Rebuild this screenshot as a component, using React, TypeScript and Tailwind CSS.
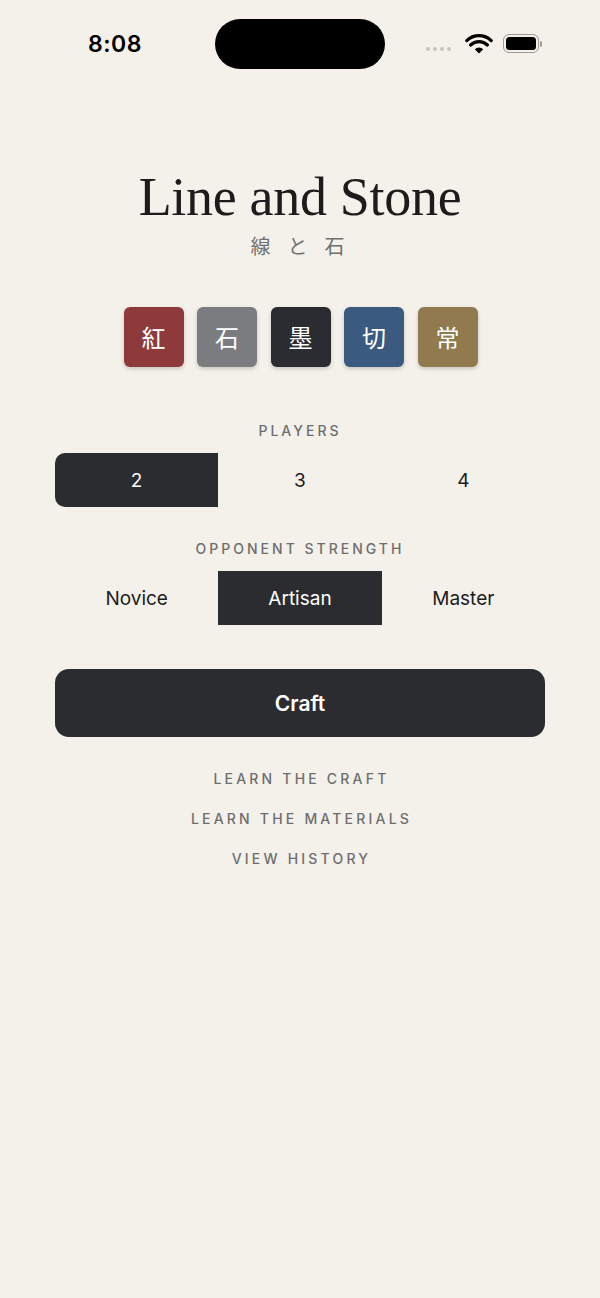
import React from "react";

const tiles = [
  { ch: "紅", bg: "bg-[#8e3a3b]" },
  { ch: "石", bg: "bg-[#7a7c80]" },
  { ch: "墨", bg: "bg-[#2a2c31]" },
  { ch: "切", bg: "bg-[#3b5a80]" },
  { ch: "常", bg: "bg-[#917a4e]" },
];

export default function App() {
  const sans = { fontFamily: "Inter, 'Noto Sans', sans-serif" };
  return (
    <div className="w-[600px] h-[1298px] bg-[#f4f1eb] flex flex-col" style={sans}>
      {/* status bar */}
      <div className="relative h-[88px] flex items-start">
        <div className="absolute left-[88px] top-[29px] text-[23px] font-semibold text-black leading-[30px] tracking-[0.5px]">8:08</div>
        <div className="absolute left-[215px] top-[19px] w-[170px] h-[50px] rounded-full bg-black" />
        <div className="absolute left-[426px] top-[47px] flex gap-[3px]">
          {[0, 1, 2, 3].map((i) => (
            <div key={i} className="w-[4px] h-[4px] rounded-full bg-[#c8c6c2]" />
          ))}
        </div>
        <svg className="absolute left-[465px] top-[33px]" width="28" height="22" viewBox="0 0 28 22">
          <path d="M14 20.5 L9.8 16.2 A6 6 0 0 1 18.2 16.2 Z" fill="#000" />
          <path d="M5.6 12 A12 12 0 0 1 22.4 12" stroke="#000" strokeWidth="3.2" fill="none" strokeLinecap="round" />
          <path d="M1.8 7.6 A17.5 17.5 0 0 1 26.2 7.6" stroke="#000" strokeWidth="3.2" fill="none" strokeLinecap="round" />
        </svg>
        <div className="absolute left-[503px] top-[34px] flex items-center">
          <div className="w-[36px] h-[19px] rounded-[6px] border-[1.5px] border-[#9a9894] p-[2px]">
            <div className="w-full h-full rounded-[3.5px] bg-black" />
          </div>
          <div className="w-[2px] h-[6px] rounded-r-full bg-[#9a9894] ml-[1px]" />
        </div>
      </div>

      {/* title */}
      <div className="mt-[78px] flex flex-col items-center">
        <h1
          className="text-[54px] leading-[62px] text-[#1c1c1c] tracking-[-0.3px]"
          style={{ fontFamily: "'Liberation Serif', 'DejaVu Serif', serif" }}
        >
          Line and Stone
        </h1>
        <div
          className="mt-[4px] text-[20px] leading-[28px] text-[#707070] tracking-[17px] pl-[12px]"
          style={{ fontFamily: "'Noto Sans CJK JP', sans-serif" }}
        >
          線と石
        </div>
      </div>

      {/* tiles */}
      <div className="mt-[47px] flex justify-center gap-[13.5px] pl-[1px]">
        {tiles.map((t) => (
          <div
            key={t.ch}
            className={`w-[60px] h-[60px] rounded-[6px] ${t.bg} flex items-center justify-center text-white text-[24px] shadow-[0_2px_4px_rgba(0,0,0,0.18)]`}
            style={{ fontFamily: "'Noto Sans CJK JP', sans-serif" }}
          >
            {t.ch}
          </div>
        ))}
      </div>

      {/* players */}
      <div className="mt-[55px] text-center text-[14px] leading-[18px] tracking-[3px] text-[#6e6e6e] font-medium">PLAYERS</div>
      <div className="mt-[13px] mx-[55px] flex h-[54px]">
        <div className="flex-1 bg-[#2a2c30] rounded-l-[10px] flex items-center justify-center pt-[3px] text-white text-[19px]">2</div>
        <div className="flex-1 flex items-center justify-center pt-[3px] text-[#1c1c1c] text-[19px]">3</div>
        <div className="flex-1 flex items-center justify-center pt-[3px] text-[#1c1c1c] text-[19px]">4</div>
      </div>

      {/* opponent */}
      <div className="mt-[33px] text-center text-[14px] leading-[18px] tracking-[3px] text-[#6e6e6e] font-medium">OPPONENT STRENGTH</div>
      <div className="mt-[13px] mx-[55px] flex h-[54px]">
        <div className="flex-1 flex items-center justify-center pt-[3px] text-[#1c1c1c] text-[19px]">Novice</div>
        <div className="flex-1 bg-[#2a2c30] flex items-center justify-center pt-[3px] text-white text-[19px]">Artisan</div>
        <div className="flex-1 flex items-center justify-center pt-[3px] text-[#1c1c1c] text-[19px]">Master</div>
      </div>

      {/* craft */}
      <div className="mt-[44px] mx-[55px] h-[68px] rounded-[14px] bg-[#2a2c30] flex items-center justify-center pt-[2px] text-white text-[21px] font-semibold">
        Craft
      </div>

      {/* links */}
      <div className="mt-[33px] flex flex-col items-center gap-[22px]">
        {["LEARN THE CRAFT", "LEARN THE MATERIALS", "VIEW HISTORY"].map((l) => (
          <div key={l} className="text-[14px] leading-[18px] tracking-[3.2px] text-[#6e6e6e] font-medium pl-[3px]">
            {l}
          </div>
        ))}
      </div>
    </div>
  );
}
